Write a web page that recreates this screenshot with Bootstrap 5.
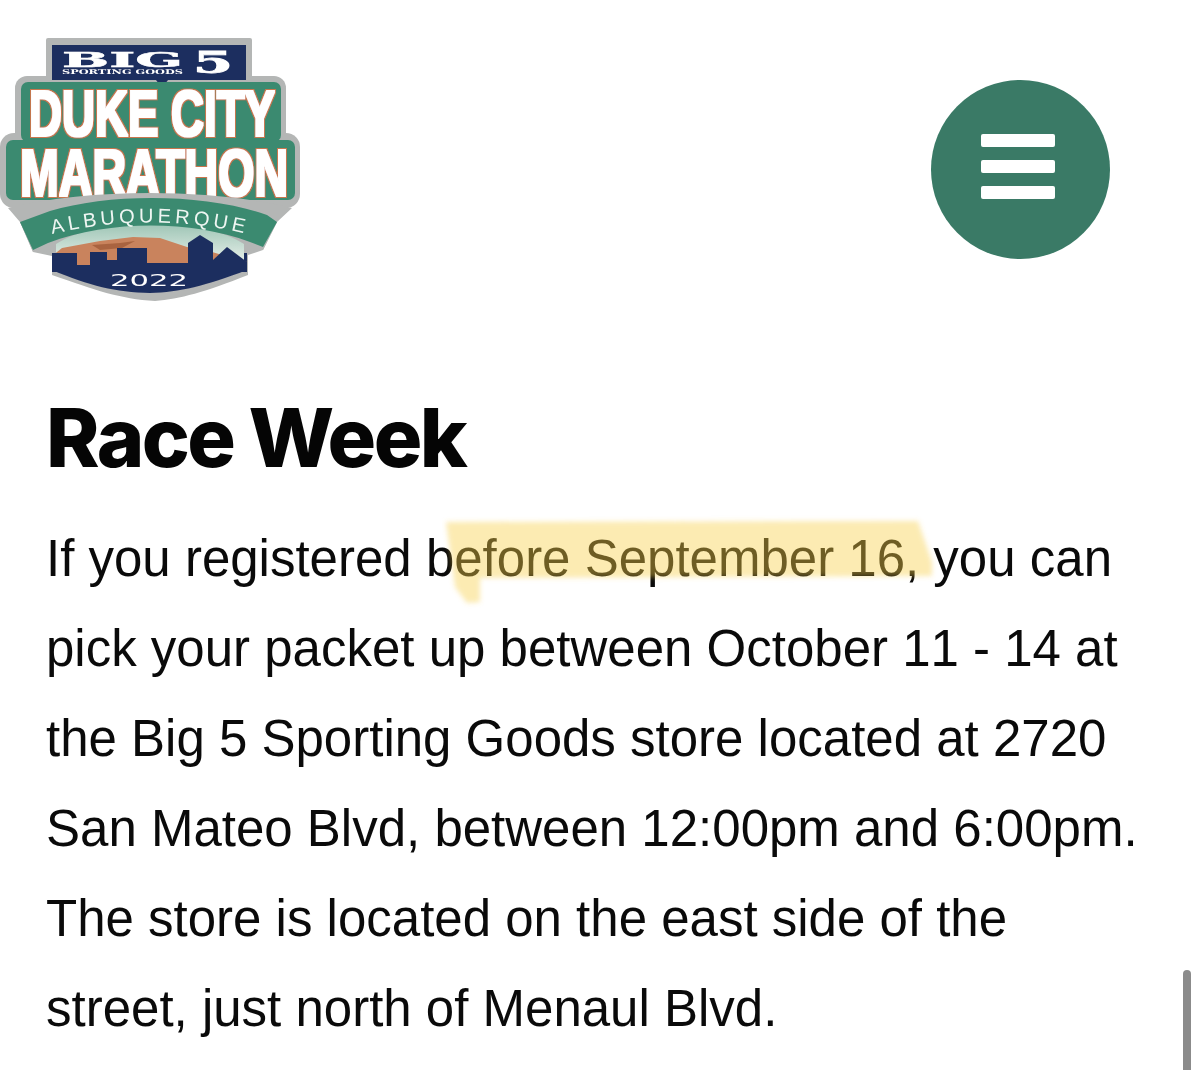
<!DOCTYPE html>
<html lang="en">
<head>
<meta charset="utf-8">
<title>Race Week</title>
<link href="https://cdn.jsdelivr.net/npm/bootstrap@5.3.0/dist/css/bootstrap.min.css" rel="stylesheet">
<style>
html,body{height:1070px;overflow:hidden;background:#fff}
.page-shell{position:relative;height:1070px}
.site-head{padding:30px 90px 0 0;height:393px}
.site-logo{display:block;width:310px;height:280px}
.menu-round{width:179px;height:179px;margin-top:50px;padding:0 6px 6px 0;border:0;background:#3a7a66;gap:13px}
.menu-round:hover,.menu-round:focus{background:#3a7a66}
.menu-round span{display:block;width:74px;height:13px;background:#fff;border-radius:2px}
.race-body{padding:0 60px 0 46px}
.race-title{font-family:Inter,"Liberation Sans",sans-serif;font-weight:800;font-size:81px;line-height:90px;color:#050505;margin:0 0 31px;letter-spacing:-2.6px}
.race-copy{font-family:"Liberation Sans",Arial,sans-serif;font-size:51px;line-height:90px;color:#0a0a0a;margin:0;font-kerning:none}
.hl-anchor{position:relative}
.hl-mark{position:absolute;left:16px;top:-18px;width:510px;height:110px;pointer-events:none}
.scroll-thumb{position:absolute;left:1183px;top:970px;width:8px;height:100px;border-radius:4px 4px 0 0;background:#8b8b8b}
</style>
</head>
<body>
<div class="page-shell">
  <header class="site-head d-flex justify-content-between align-items-start">
    <svg class="site-logo" viewBox="0 0 310 280" role="img" aria-label="Big 5 Sporting Goods Duke City Marathon Albuquerque 2022">
      <defs>
        <filter id="lettering" x="-5%" y="-10%" width="110%" height="120%">
          <feMorphology in="SourceAlpha" operator="dilate" radius="2" result="outer"/>
          <feFlood flood-color="#c9764d"/><feComposite in2="outer" operator="in" result="rim"/>
          <feMorphology in="SourceAlpha" operator="dilate" radius="1" result="inner"/>
          <feFlood flood-color="#ffffff"/><feComposite in2="inner" operator="in" result="face"/>
          <feMerge><feMergeNode in="rim"/><feMergeNode in="face"/></feMerge>
        </filter>
        <filter id="soft"><feGaussianBlur stdDeviation="2.5"/></filter>
        <filter id="logo-soft"><feGaussianBlur stdDeviation=".35"/></filter>
        <linearGradient id="sky" x1="0" y1="0" x2="0" y2="1"><stop offset="0" stop-color="#9cc4b4"/><stop offset="1" stop-color="#e6efe9"/></linearGradient>
      </defs>
      <g filter="url(#logo-soft)">
      <g fill="#b4b6b5">
        <rect x="46" y="8" width="206" height="46" rx="2"/>
        <rect x="15" y="46" width="271" height="70" rx="12"/>
        <rect x="0" y="103" width="300" height="75" rx="14"/>
        <path d="M20 192L60 170H240L277 192L263 220L248 225V245C205 262 180 269 155 271C120 269 95 260 52 245V226L33 222Z"/>
      </g>
      <path d="M52 15H246V50H168L162 58L156 50H52Z" fill="#1f2f5f"/>
      <rect x="21" y="52" width="260" height="60" rx="7" fill="#3b8a70"/>
      <rect x="6" y="110" width="289" height="60" rx="7" fill="#3b8a70"/>
      <g font-family="'DejaVu Serif',serif" font-weight="700" fill="#fff">
        <text x="62" y="37" font-size="20" stroke="#fff" stroke-width=".5" textLength="121" lengthAdjust="spacingAndGlyphs">BIG</text>
        <text x="62" y="44" font-size="6.5" textLength="121" lengthAdjust="spacingAndGlyphs">SPORTING GOODS</text>
        <text x="193" y="43" font-size="29" stroke="#fff" stroke-width=".8" textLength="40" lengthAdjust="spacingAndGlyphs">5</text>
      </g>
      <g font-family="'Liberation Sans',sans-serif" font-weight="700" fill="#fff" filter="url(#lettering)">
        <text x="29" y="106" font-size="64" textLength="246" lengthAdjust="spacingAndGlyphs">DUKE CITY</text>
        <text x="20" y="166" font-size="67" textLength="268" lengthAdjust="spacingAndGlyphs">MARATHON</text>
      </g>
      <path d="M8 178C90 158 210 158 292 178L277 192L263 220L33 222L20 192Z" fill="#b4b6b5"/>
      <path d="M52 223H247V240C205 256 180 262 150 263C115 262 90 256 52 240Z" fill="#1f2f5f"/>
      <path d="M56 214C100 186 200 186 244 214V232H56Z" fill="url(#sky)"/>
      <path d="M62 218L100 211L133 207L160 208L187 217L212 222L247 232V240H52V226Z" fill="#c9835d"/>
      <path d="M92 215L120 213L135 211L122 218L100 220Z" fill="#a9643f"/>
      <path d="M52 223H77V235H90V222H107V230H117V218H147V233H188V213L200 205L213 213V230L227 217L247 232V242H52Z" fill="#1f2f5f"/>
      <path d="M20 192L50 181C110 163 205 163 267 185L277 192L263 217L250 212C190 190 110 190 48 213L33 220Z" fill="#3b8a70"/>
      <path id="ribbon-arc" d="M52 204Q152 181 248 204" fill="none"/>
      <text font-family="'Liberation Sans',sans-serif" font-size="20" fill="#eef6f2" letter-spacing="4"><textPath href="#ribbon-arc">ALBUQUERQUE</textPath></text>
      <text x="149" y="256" text-anchor="middle" font-family="'DejaVu Sans',sans-serif" font-size="16" fill="#fff" textLength="78" lengthAdjust="spacingAndGlyphs">2022</text>
      </g>
    </svg>
    <button class="btn menu-round rounded-circle d-flex flex-column align-items-center justify-content-center" type="button" aria-label="Menu"><span></span><span></span><span></span></button>
  </header>
  <main class="race-body">
    <h1 class="race-title">Race Week</h1>
    <p class="race-copy">If you registered <span class="hl-anchor">before September 16,<svg class="hl-mark" viewBox="0 0 510 110" aria-hidden="true"><path d="M4 10L476 9L490 50L490 64L38 66L38 90L25 91L13 75Z" fill="#f7cf4a" fill-opacity=".42" filter="url(#soft)"/></svg></span> you can pick your packet up between October 11 - 14 at the Big 5 Sporting Goods store located at 2720 San Mateo Blvd, between 12:00pm and 6:00pm. The store is located on the east side of the street, just north of Menaul Blvd.</p>
  </main>
  <div class="scroll-thumb"></div>
</div>
<script src="https://cdn.jsdelivr.net/npm/bootstrap@5.3.0/dist/js/bootstrap.bundle.min.js"></script>
</body>
</html>
